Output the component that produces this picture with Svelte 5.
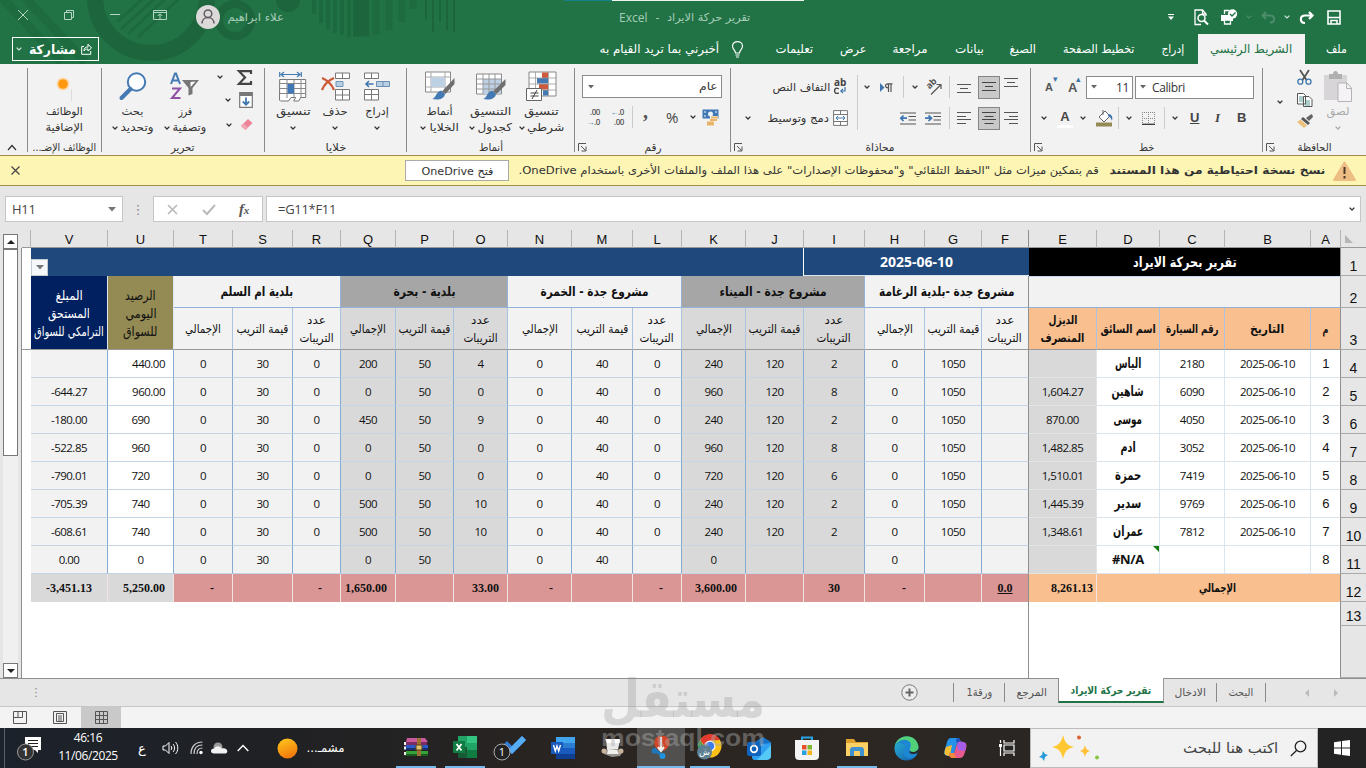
<script>
  // squeezes or stretches a label so it takes exactly its slot
  function fit(node, w) {
    const natural = node.offsetWidth;
    if (natural) node.style.transform = `scaleX(${w / natural})`;
  }

  const icons = {
    close: [12, 12, '<path d="M1 1l10 10M11 1L1 11" stroke="#b5d6c3" fill="none"/>'],
    restore: [12, 12, '<path d="M1.500 3.500h7v7h-7zM3.500 3.500v-2h7v7h-2" stroke="#b5d6c3" fill="none"/>'],
    minimize: [12, 12, '<path d="M1 5.500h10" stroke="#b5d6c3"/>'],
    ribbonopt: [14, 12, '<path d="M.5 1.500h13v9H.5zM.5 3.500h13M7 10V5M4.800 7L7 4.800 9.200 7" stroke="#b5d6c3" fill="none"/>'],
    avatar: [24, 24, '<circle cx="12" cy="12" r="12" fill="#dcd9d9"/><circle cx="12" cy="8.800" r="3.800" fill="none" stroke="#625b62" stroke-width="1.500"/><path d="M6 18.500c0-8 12-8 12 0" fill="none" stroke="#625b62" stroke-width="1.500"/>'],
    more: [6, 8, '<path d="M0 1.500h6" stroke="#fff"/><path d="M0 3.500h6L3 7z" fill="#fff"/>'],
    preview: [15, 17, '<path d="M7 15.500H1V1h7.500l3.500 4v2M8.500 1v4H12" fill="none" stroke="#fff" stroke-width="1.300"/><circle cx="7.500" cy="9" r="3.500" fill="none" stroke="#fff" stroke-width="1.500"/><path d="M10 11.500l4 4" stroke="#fff" stroke-width="2"/>'],
    printer: [18, 16, '<path d="M1 6h12v6H1z" fill="#fff"/><path d="M4.500 5V1.500h5M4.500 11h6v4h-6z" fill="#217346" stroke="#fff" stroke-width="1.300"/><circle cx="12.500" cy="5" r="4.700" fill="#fff"/><path d="M10 5l2 2 3.500-3.500" fill="none" stroke="#217346" stroke-width="1.300"/>'],
    undo: [15, 12, '<path d="M5 1L1.500 4.500 5 8M2 4.500h7c5.500 0 5.500 7 0 7" fill="none" stroke="#4b8d69" stroke-width="2"/>'],
    redo: [15, 13, '<path d="M10 1l3.500 3.500L10 8M13 4.500H6c-5.500 0-5.500 7.500 0 7.500" fill="none" stroke="#fff" stroke-width="2.200"/>'],
    save: [14, 15, '<path d="M1 1h12v13H1z" fill="none" stroke="#fff" stroke-width="1.600"/><path d="M1 7.500h12M4 14v-3.500h6V14" fill="none" stroke="#fff" stroke-width="1.500"/>'],
    share: [11, 12, '<path d="M3 3.500H.7v7.800h9V8M3 8c0-3 1.500-4 4-4V1.200L10.500 5 7 8V6C5 6 4 6.500 3 8z" fill="none" stroke="#fff"/>'],
    bulb: [11, 17, '<path d="M3.500 12c0-3-3-3.500-3-7C.5-.8 10.500-.8 10.500 5c0 3.500-3 4-3 7zM3.500 14h4M4 16h3" fill="none" stroke="#fff" stroke-width="1.200"/>'],
    chev: [6, 4, '<path d="M.6.6L3 3 5.400.6" fill="none" stroke="#333" stroke-width="1.300"/>'],
    chevw: [6, 4, '<path d="M.6.6L3 3 5.400.6" fill="none" stroke="#d3e5da" stroke-width="1.200"/>'],
    chevg: [6, 4, '<path d="M.6.6L3 3 5.400.6" fill="none" stroke="#aaa" stroke-width="1.300"/>'],
    chevdim: [6, 4, '<path d="M.6.6L3 3 5.400.6" fill="none" stroke="#4b8d69" stroke-width="1.200"/>'],
    tri: [6, 4, '<path d="M0 0h6L3 3.500z" fill="#666"/>'],
    tribig: [8, 5, '<path d="M0 0h8L4 4.500z" fill="#777"/>'],
    up: [10, 7, '<path d="M1 6l4-4.500L9 6" fill="none" stroke="#333" stroke-width="1.200"/>'],
    launch: [9, 9, '<path d="M.5 8V.5H8M3 3l4.500 4.500M8 3.500V8H3.500" fill="none" stroke="#555"/>'],
    addin: [18, 32, '<circle cx="8" cy="14" r="6.500" fill="#fbd9a9"/><circle cx="8" cy="14" r="4.800" fill="#ff9710"/><path d="M16.500 19v12" stroke="#ddd"/>'],
    find: [28, 28, '<circle cx="17.500" cy="10" r="8.700" fill="#fcfdff" stroke="#4479b3" stroke-width="2"/><path d="M11.500 17L2.500 26" stroke="#4479b3" stroke-width="4" stroke-linecap="round"/>'],
    sort: [30, 28, '<path d="M1 12L5 1.500h1L10 12M2.500 8.500h6" fill="none" stroke="#4479b3" stroke-width="2"/><path d="M2 16.500h8L2 26h8.500" fill="none" stroke="#9152a5" stroke-width="2"/><path d="M12 8h17l-6.500 8v6l-4 1.500V16z" fill="#777"/><path d="M20.500 10l5-.5-5 5.500z" fill="#fff"/>'],
    sigma: [16, 15, '<path d="M14 4V1.200H2L8 7.500 2 13.800h12V11" fill="none" stroke="#444" stroke-width="2.200"/>'],
    filldown: [14, 16, '<path d="M.7.700h12.600v14.600H.7z" fill="#fff" stroke="#777" stroke-width="1.200"/><path d="M1 1h12v3H1z" fill="#777"/><path d="M7 5.500v7M3.800 9.500L7 12.700l3.200-3.200" fill="none" stroke="#3f76ad" stroke-width="1.800"/>'],
    eraser: [13, 13, '<path d="M1 8l7-7 4.500 4L5.500 12z" fill="#ec8396"/><path d="M1 8l2.500-2.500L8 9.500 5.500 12z" fill="#f4a5b2"/>'],
    format: [28, 31, '<path d="M.7 1v5M22.300 1v5M2 3.500h19M5 1L2 3.500 5 6M18 1l3 2.500L18 6" fill="none" stroke="#4479b3" stroke-width="1.200"/><path d="M.7 8.500h26v18h-5l-2 3.500h-5l2-3.500H12L9.500 30h-8l-1-1z" fill="#fff" stroke="#777"/><path d="M1 12.500h26M1 22.500h26M8 8v19M15 8v19M22 8v19M1 17.500h26" stroke="#888"/><path d="M8.500 13h6.500v9.500H8.500z" fill="#3f78b4"/>'],
    delete: [29, 29, '<path d="M14.500 1h14v5.500h-14zM21.500 1v5.500M14.500 17.500h14V28h-14zM14.500 23h14M21.500 17v11" fill="#fff" stroke="#777"/><path d="M15 9.500h7v5h-7z" fill="#b7cfe5" stroke="#7294b8"/><path d="M1 6c5 2 10 7 12 12M13 6C8 8 3 13 1 18" fill="none" stroke="#cd5a3b" stroke-width="2.300"/>'],
    insert: [26, 28, '<path d="M.5 1h14v5.500H.5zM7.500 1v5.500M.5 17.500h14V28H.5zM.5 22.500h14M7.500 17v11" fill="#fff" stroke="#777"/><path d="M12.500 9.500h13v5h-13zM19 9.500v5" fill="#b7cfe5" stroke="#6d8eb0"/><path d="M9.500 12H2.500M5 9l-3 3 3 3" fill="none" stroke="#3f76ad" stroke-width="1.500"/>'],
    cellstyle: [30, 30, '<path d="M.5 1h25v20H.5z" fill="#fff" stroke="#888"/><path d="M.5 6h25M.5 16h25M6 1v20M20 1v20" stroke="#aaa"/><path d="M6 6.500h14V16H6z" fill="#bdd0e4"/><path d="M29.500 7v6l-9 10-3.500-2.500z" fill="#6f6f6f"/><path d="M16 19.500l4 3.500c-1 6-8 6-13 5 4-1 4-7 9-8.500z" fill="#4479b3"/>'],
    tablestyle: [30, 30, '<path d="M.5 3h25v20H.5z" fill="#fff" stroke="#888"/><path d="M7 8h18v15H7z" fill="#bdd0e4"/><path d="M.5 8h25M.5 13h25M.5 18h25M7 3v20M13 3v20M19 3v20" stroke="#999"/><path d="M29.500 8v6l-9 9-3.500-2.500z" fill="#6f6f6f"/><path d="M16 19.500l4 3.500c-1 6-8 6-13 5 4-1 4-7 9-8.500z" fill="#4479b3"/>'],
    condfmt: [31, 31, '<path d="M3 1h27v24H3z" fill="#fff" stroke="#888"/><path d="M16 1.500h6V7h-6zM13 13h9v5.500h-9z" fill="#cd5a3b"/><path d="M11 7h11v5.500H11zM17 19h5v5.500h-5z" fill="#4479b3"/><path d="M3 7h27M3 13h27M3 19h27M9.500 1v24M22.500 1v24" stroke="#999" stroke-width=".8"/><path d="M.5 17.500h15v12H.5z" fill="#fff" stroke="#666"/><path d="M4.500 22h8M4.500 25h8M11 19l-5 9" stroke="#444" fill="none"/>'],
    money: [18, 16, '<path d="M.5.500h16v9H.5z" fill="#3f78b4"/><path d="M2 3h2M13 3h2M2 7h2" stroke="#fff"/><circle cx="8.500" cy="5" r="2.500" fill="#e9f2fa"/><path d="M8 7h8v9H8z" fill="#f2f2f2"/><path d="M9 8.500h7M8 11h7M5 13.500h7M5 15.500h7" stroke="#eab568" stroke-width="1.800"/>'],
    wrap: [13, 8, '<path d="M4.800 1.800C1 0 .6 2.500.6 3.800.6 5.500 1.500 7.200 4.800 6" fill="none" stroke="#444" stroke-width="1.400"/><path d="M11 0v4H7M9 1.800L6.800 4 9 6.200" fill="none" stroke="#3f76ad" stroke-width="1.200"/>'],
    merge: [15, 16, '<path d="M.6.600h13.800v14.800H.6zM.6 4.500h13.800M.6 11.500h13.800M7.500.600v4M7.500 11.500v4" fill="#fff" stroke="#777"/><path d="M3 8h9M5 6L3 8l2 2M10 6l2 2-2 2" fill="none" stroke="#3f76ad"/>'],
    rtl: [13, 9, '<path d="M0 0l4.500 4.500L0 9z" fill="#3f76ad"/><path d="M8.500 9V1M11 9V1M12.500.800H8c-3.500 0-3 4 0 4" fill="none" stroke="#555" stroke-width="1.200"/>'],
    orient: [17, 16, '<path d="M5 14.500L15 4.500M15 9V4.500h-4.500" fill="none" stroke="#555" stroke-width="1.200"/>'],
    indentr: [16, 13, '<path d="M0 1h16M8.500 4.500H16M8.500 8H16M0 12h16" stroke="#555"/><path d="M0 6.200h6M3.500 3.500l3 2.700-3 2.800" fill="none" stroke="#3f76ad" stroke-width="1.700"/>'],
    indentl: [16, 13, '<path d="M0 1h16M8.500 4.500H16M8.500 8H16M0 12h16" stroke="#555"/><path d="M1 6.200h6M3.500 3.500L.8 6.200l2.700 2.800" fill="none" stroke="#3f76ad" stroke-width="1.700"/>'],
    vbottom: [14, 12, '<path d="M0 3.500h14M3 7.500h8M0 11.500h14" stroke="#555"/>'],
    vtop: [14, 12, '<path d="M0 -2.500h14M3 1.500h8M0 5.500h14" stroke="#555"/>'],
    vmid: [14, 12, '<path d="M0 1.500h14M3 5.500h8M0 9.500h14" stroke="#444"/>'],
    al: [14, 12, '<path d="M0 .5h14M0 4.500h9M0 7.500h14M0 11.500h9" stroke="#555"/>'],
    ac: [14, 12, '<path d="M0 .5h14M2.500 4.500h9M0 7.500h14M2.500 11.500h9" stroke="#444"/>'],
    ar: [14, 12, '<path d="M0 .5h14M5 4.500h9M0 7.500h14M5 11.500h9" stroke="#555"/>'],
    fill: [17, 17, '<path d="M0 12.500h16v4H0z" fill="#948a54"/><path d="M3 7l6-6 5 5-6 6zM7 0v5" fill="#fff" stroke="#666"/><path d="M12 4c4 0 5 3 4 7-1-3-2-4-4-5z" fill="#3f76ad"/>'],
    borders: [13, 13, '<path d="M.5 0v12M6.500 0v12M12.500 0v12M0 .5h13M0 6.500h13" stroke="#888" stroke-dasharray="1 1"/><path d="M0 12.300h13" stroke="#333" stroke-width="1.300"/>'],
    cut: [15, 15, '<path d="M3 0l6.500 10M12 0L5.500 10" stroke="#555" stroke-width="1.800"/><circle cx="3.300" cy="11.700" r="2.500" fill="none" stroke="#3f76ad" stroke-width="1.300"/><circle cx="11.500" cy="11.700" r="2.500" fill="none" stroke="#3f76ad" stroke-width="1.300"/>'],
    copy: [16, 14, '<path d="M.5.500h6l2 2V11h-8zM6.500 3.500h5.500l3 3v7H6.500z" fill="#fff" stroke="#555"/><path d="M2 4h4M2 6h4M2 8h4M8 8h5M8 10h5M8 12h5" stroke="#2f8079" stroke-width=".8"/>'],
    painter: [16, 14, '<path d="M15 0l1 3-4 4-3-3 4-3z" fill="#666"/><path d="M6 3l7 6-2 2-7-6z" fill="#555"/><path d="M3.500 5.500l6.500 6L7 14 0 8z" fill="#edc07b"/>'],
    paste: [28, 31, '<path d="M0 4h23v25H0z" fill="#d8d5d8"/><path d="M5 3h4c0-4 5-4 5 0h4v5H5z" fill="#b0b0b0"/><path d="M14 12h9l4.500 5v13.500H14z" fill="#f6f3f6" stroke="#b4b4b4"/><path d="M22.500 12v5.500H28" fill="none" stroke="#b4b4b4"/>'],
    warn: [23, 20, '<path d="M11.500 1.500L22 19H1z" fill="#eebd84" stroke="#eebd84" stroke-width="2" stroke-linejoin="round"/><path d="M11.500 6v7M11.500 15v2.500" stroke="#4a3a28" stroke-width="2"/>'],
    x: [11, 11, '<path d="M1 1l9 9M10 1l-9 9" stroke="#b9b9b9" stroke-width="1.600"/>'],
    xd: [9, 9, '<path d="M.5.500l8 8M8.500.500l-8 8" stroke="#444" stroke-width="1.200"/>'],
    tick: [14, 11, '<path d="M1 6l4 4 8-9" fill="none" stroke="#b9b9b9" stroke-width="2"/>'],
    plus: [17, 17, '<circle cx="8.500" cy="8.500" r="7.700" fill="#ededed" stroke="#777"/><path d="M8.500 4.500v8M4.500 8.500h8" stroke="#666" stroke-width="2"/>'],
    left: [4, 8, '<path d="M4 0v8L0 4z" fill="#bbb"/>'],
    right: [4, 8, '<path d="M0 0v8l4-4z" fill="#bbb"/>'],
    pagebreak: [14, 13, '<path d="M.5.500h13v12H.5zM5 .5v6M9.500.5v6M.5 6.500h9" fill="none" stroke="#555"/>'],
    pagelayout: [14, 13, '<path d="M.5.500h13v12H.5zM3.500 2.500h7v8h-7zM5 5h4M5 7h4M5 9h4" fill="none" stroke="#555"/>'],
    normal: [13, 13, '<path d="M.5.500h12v12H.5zM4.500.500v12M8.500.500v12M.5 4.500h12M.5 8.500h12" fill="none" stroke="#555"/>'],
    notif: [25, 26, '<path d="M8 2h16v13h-3v3l-3-3H8z" fill="#fff"/><path d="M11 5.500h10M11 8.500h10M13 11.500h8" stroke="#222"/><circle cx="8.500" cy="17" r="8" fill="#333" stroke="#999"/><text x="8.500" y="21" text-anchor="middle" fill="#fff" font-size="11" font-family="Open Sans, sans-serif" font-weight="600">1</text>'],
    speaker: [17, 14, '<path d="M1 5h2.500L7 1.500v11L3.500 9H1zM9 5c1 1 1 3 0 4M11 3c2 2 2 6 0 8M13.500 1c3 3 3 9 0 12" fill="none" stroke="#fff"/>'],
    wifi: [13, 14, '<path d="M1 13C1 5 6 1 12.500 1M4 13c0-6 3-9 8.500-9M7 13c0-4 2-6 5.500-6" fill="none" stroke="#ccc" stroke-width="1.200"/><circle cx="11" cy="11.500" r="1.700" fill="#fff"/>'],
    cloud: [17, 12, '<circle cx="7" cy="5" r="4.500" fill="#999"/><path d="M3 11.500c-4 0-4-5 0-5 2-3 6-3 7.500 0 6-2 8 5 3 5z" fill="#f1f1f1"/>'],
    tup: [12, 8, '<path d="M.7 7L6 1.500 11.300 7" fill="none" stroke="#fff" stroke-width="1.400"/>'],
    sun: [21, 21, '<defs><linearGradient id="s" x1=".3" x2=".7" y2="1"><stop stop-color="#ffc21c"/><stop offset="1" stop-color="#f0730c"/></linearGradient></defs><circle cx="10.500" cy="10.500" r="10" fill="url(#s)"/>'],
    winrar: [25, 20, '<path d="M3 1h18l3 4H2z" fill="#c85a9b"/><path d="M1 5h22v4H1z" fill="#7b2d63"/><path d="M2 8h22v5H2z" fill="#2c59c8"/><path d="M1 11h23v2H1z" fill="#18306e"/><path d="M2 14h22v5H2z" fill="#37a13a"/><path d="M1 17h23v2H1z" fill="#1b5a21"/><path d="M1 5v3M1 9.500v3M1 15v3" stroke="#eee" stroke-width="2"/><path d="M13 1h4v18h-4z" fill="#9c7132"/><path d="M12 8h6v5h-6z" fill="#e0bf6a" stroke="#5a4118"/>'],
    excel: [24, 22, '<path d="M5 0h19v22H5z" fill="#21a366"/><path d="M14 0h10v7H14z" fill="#33c481"/><path d="M5 11h9v11H5z" fill="#185c37"/><path d="M14 14h10v8H14z" fill="#107c41"/><path d="M0 5h12v12H0z" fill="#107c41"/><path d="M3.500 8l5 6.500M8.500 8l-5 6.500" stroke="#fff" stroke-width="1.800"/>'],
    todo: [34, 26, '<path d="M10 10l4-4 5 5 10-10 4 4-14 14z" fill="#2f7ad6"/><path d="M15 15L29 1l4 4-14 14z" fill="#55aef4"/><circle cx="9" cy="17" r="8" fill="#222" stroke="#aaa"/><text x="9" y="21" text-anchor="middle" fill="#fff" font-size="11" font-family="Open Sans, sans-serif">1</text>'],
    word: [24, 22, '<path d="M5 0h19v22H5z" fill="#2b7cd3"/><path d="M5 0h19v6H5z" fill="#41a5ee"/><path d="M5 11h19v6H5z" fill="#185abd"/><path d="M5 17h19v5H5z" fill="#103f91"/><path d="M0 5h12v12H0z" fill="#185abd"/><path d="M2.500 8l1.800 6L6 9l1.700 5 1.800-6" fill="none" stroke="#fff" stroke-width="1.400"/>'],
    scroll: [23, 20, '<path d="M5 1h14l-2 11H6z" fill="#e8e8e8"/><path d="M4 1h15v4H6z" fill="#fff"/><path d="M1 11l7 1 8-1 6 2-3 5-8 1-8-3z" fill="#9a948e"/><path d="M7 12h9l2 4H6z" fill="#f3f1ee"/><circle cx="3" cy="13" r="2.500" fill="#c9b49d"/><circle cx="20" cy="13" r="2.500" fill="#c9b49d"/>'],
    snip: [20, 25, '<path d="M5 3C8 0 14 0 17 3c3 4 1 10-4 13l-2-3-2 3C3 13 2 7 5 3z" fill="#d14424"/><path d="M10 2v13M7 12l3 4 3-4" fill="none" stroke="#eee" stroke-width="2.200"/><path d="M3 14l6 5" stroke="#1f78bd" stroke-width="3"/><circle cx="3.500" cy="16" r="2.800" fill="#1f78bd"/><circle cx="11.500" cy="21" r="3" fill="#2294dc"/>'],
    chrome: [26, 26, '<circle cx="13" cy="12" r="11.500" fill="#fbc116"/><path d="M3 6c5-8 16-8 20 0l-10 .5-4 7z" fill="#e33b2e"/><path d="M3 6l6 10 4 1.500-4 6C0 21-1 12 3 6z" fill="#269947"/><circle cx="13" cy="12" r="5.500" fill="#fff"/><circle cx="13" cy="12" r="4.300" fill="#3b7ded"/><circle cx="7.500" cy="18" r="7.500" fill="#5d7f91"/><text x="7.500" y="21" text-anchor="middle" fill="#fff" font-size="9" font-family="DejaVu Sans, sans-serif">ش</text>'],
    outlook: [25, 23, '<path d="M8 5l8-5 8 5v4H8z" fill="#1470c5"/><path d="M5 8l19-2v13c0 3-3 4-5 4H8c-2 0-3-1-3-3z" fill="#2f9ff0"/><path d="M24 8v11c0 3-3 4-5 4H10z" fill="#56c8f5"/><rect y="5" width="14" height="14" rx="2" fill="#0f62bd"/><circle cx="7" cy="12" r="3.300" fill="none" stroke="#fff" stroke-width="1.700"/>'],
    store: [24, 24, '<path d="M7 5V1.500h10V5" fill="none" stroke="#2aa1de" stroke-width="2"/><path d="M0 4h24v16c0 3-2 4-4 4H4c-2 0-4-1-4-4z" fill="#f4f4f4"/><path d="M7 9h4.500v4.500H7z" fill="#e8502d"/><path d="M12.500 9H17v4.500h-4.500z" fill="#7cb82f"/><path d="M7 14.500h4.500V19H7z" fill="#2aa1de"/><path d="M12.500 14.500H17V19h-4.500z" fill="#f7b51b"/>'],
    explorer: [23, 19, '<path d="M0 1h8l2 3h12v14H0z" fill="#dca02b"/><path d="M0 5h22v13H0z" fill="#fbd064"/><path d="M4 18v-6c0-2 1-3 3-3h8c2 0 3 1 3 3v6h-4v-5H8v5z" fill="#4091cf"/>'],
    edge: [25, 25, '<defs><linearGradient id="e" y2="1"><stop stop-color="#2ab7d9"/><stop offset="1" stop-color="#1256a8"/></linearGradient></defs><circle cx="12.500" cy="12.500" r="12" fill="url(#e)"/><path d="M1 9C5-3 23-3 24.500 11c0 5-5 6-9 4 3-6-5-11-14.500-6z" fill="#51cf79"/><path d="M1 9C8 0 19 4 16.500 11c-2 4 1 7 7 6-3 8-14 7-14-1 0-4 3-6 3-6S7 5 1 9z" fill="#1d87d3"/><path d="M15.500 15c3 2 9 1 9-4v3l-1 3c-4 2-9 1-8-2z" fill="#25272b"/>'],
    copilot: [23, 22, '<path d="M7 1h8l3 6h-5l-3 9c-1 3-3 4-6 3-5-1-4-3-3-7l2-7c1-3 2-4 4-4z" fill="#2492e8"/><path d="M2 10l6-2-2 11c-7 0-6-4-4-9z" fill="#f1bf35"/><path d="M15 1l3 6h-5l-1-5z" fill="#1c4fc2"/><path d="M16 21H8c-2 0-3-3-3-5h5l3-9c1-3 3-3 6-2 4 1 4 3 3 7l-2 6c-1 2-2 3-4 3z" fill="#e65a8e"/><path d="M13 7c2-3 9-3 9 1l-1 6-7-1z" fill="#a45eea"/><path d="M5 16h5l2 5H8c-2 0-3-3-3-5z" fill="#f0893c"/>'],
    taskview: [17, 16, '<path d="M6 0v3h10V0M6 16v-3h10v3M6 5h10v6H6zM2.500 0v3M2.500 7v9" fill="none" stroke="#fff" stroke-width="1.200"/><path d="M1 4h3v3H1z" fill="#fff"/>'],
    stars: [62, 26, '<path d="M4 16l2 3 3 1-3 2-1 4-2-3-3-1 3-2z" fill="#269bdb"/><path d="M24 0c2 8 4 10 11 12-7 2-9 4-11 12-2-8-4-10-11-12 7-2 9-4 11-12z" fill="#ffc832"/><path d="M46 10c1 4 2 5 5 6-3 1-4 2-5 6-1-4-2-5-5-6 3-1 4-2 5-6z" fill="#ffbf36"/><circle cx="40" cy="2.500" r="2" fill="#da6332"/><circle cx="58" cy="22.500" r="2" fill="#89c543"/>'],
    search: [17, 17, '<circle cx="10.500" cy="6.500" r="5.300" fill="none" stroke="#222" stroke-width="1.300"/><path d="M6.500 10.500L.8 16" stroke="#222" stroke-width="1.300"/>'],
    start: [16, 16, '<path d="M0 2.300l7-1v6.200H0zM8 1.100L16 0v7.500H8zM0 8.500h7v6.200l-7-1zM8 8.500h8V16l-8-1.100z" fill="#fff"/>']
  };

  const menu = [
    { w: 38, gap: 27, t: 'تعليمات' },
    { w: 26, gap: 27, t: 'عرض' },
    { w: 35, gap: 27, t: 'مراجعة' },
    { w: 29, gap: 26, t: 'بيانات' },
    { w: 26, gap: 27, t: 'الصيغ' },
    { w: 71, gap: 27, t: 'تخطيط الصفحة' },
    { w: 23, gap: 14, t: 'إدراج' }
  ];

  const letters = 'VUTSRQPONMLKJIHGFEDCBA'.split('');
  const heights = [28, 32, 42, 28, 28, 28, 28, 28, 28, 28, 28, 28, 24];

  const d = '2025-06-10';
  const names = ['الياس', 'شاهين', 'موسى', 'ادم', 'حمزة', 'سدير', 'عمران'];
  const nameW = [26, 32, 28, 15, 26, 27, 30];
  const rows = [
    ['', '440.00', 0, 30, 0, 200, 50, 4, 0, 40, 0, 240, 120, 2, 0, 1050, '', '', 0, 2180, d, 1],
    ['-644.27', '960.00', 0, 30, 0, 0, 50, 0, 0, 40, 0, 960, 120, 8, 0, 1050, '', '1,604.27', 0, 6090, d, 2],
    ['-180.00', 690, 0, 30, 0, 450, 50, 9, 0, 40, 0, 240, 120, 2, 0, 1050, '', '870.00', 0, 4050, d, 3],
    ['-522.85', 960, 0, 30, 0, 0, 50, 0, 0, 40, 0, 960, 120, 8, 0, 1050, '', '1,482.85', 0, 3052, d, 4],
    ['-790.01', 720, 0, 30, 0, 0, 50, 0, 0, 40, 0, 720, 120, 6, 0, 1050, '', '1,510.01', 0, 7419, d, 5],
    ['-705.39', 740, 0, 30, 0, 500, 50, 10, 0, 40, 0, 240, 120, 2, 0, 1050, '', '1,445.39', 0, 9769, d, 6],
    ['-608.61', 740, 0, 30, 0, 500, 50, 10, 0, 40, 0, 240, 120, 2, 0, 1050, '', '1,348.61', 0, 7812, d, 7],
    ['0.00', 0, 0, 30, '', 0, 50, '', 0, 40, '', 0, '', '', 0, '', '', '', 0, '', '', 8]
  ];
  const totals = ['-3,451.13', '5,250.00', '-', '', '-', '1,650.00', '', '33.00', '-', '', '-', '3,600.00', '', '30', '-', '', '0.0', '8,261.13'];

  const groups = [
    { from: 4, span: 3, t: 'بلدية ام السلم', w: 73 },
    { from: 7, span: 3, t: 'بلدية - بحرة', w: 62, dark: true },
    { from: 10, span: 3, t: 'مشروع جدة - الخمرة', w: 108 },
    { from: 13, span: 3, t: 'مشروع جدة - الميناء', w: 107, dark: true },
    { from: 16, span: 3, t: 'مشروع جدة -بلدية الرغامة', w: 135 }
  ];
  const orange = [
    { t: ['الديزل', 'المنصرف'], w: [29, 44] },
    { t: ['اسم السائق'], w: [55] },
    { t: ['رقم السيارة'], w: [53] },
    { t: ['التاريخ'], w: [34] },
    { t: ['م'], w: [6] }
  ];

  function shade(i) {
    if (i === 1) return 'white';
    if ((i >= 5 && i <= 7) || (i >= 11 && i <= 13)) return 'grey';
    if (i === 17) return 'grey diesel';
    if (i > 17) return 'white plain';
    return 'light';
  }

  const apps = [
    { n: 'winrar', x: 396, w: 40, on: true },
    { n: 'excel', x: 445, w: 40, on: true },
    { n: 'todo', x: 490, w: 40 },
    { n: 'word', x: 543, w: 40 },
    { n: 'scroll', x: 592, w: 40 },
    { n: 'snip', x: 637, w: 48, on: true, hot: true },
    { n: 'chrome', x: 690, w: 40, on: true },
    { n: 'outlook', x: 739, w: 40 },
    { n: 'store', x: 787, w: 40 },
    { n: 'explorer', x: 837, w: 40, on: true },
    { n: 'edge', x: 886, w: 40 },
    { n: 'copilot', x: 935, w: 40 },
    { n: 'taskview', x: 986, w: 40 }
  ];
  const appCols = apps.map((a, i) => (i < apps.length - 1 ? apps[i + 1].x - a.x : 44) + 'px').join(' ');
</script>

{#snippet icon(name)}
  <svg class="ic" width={icons[name][0]} height={icons[name][1]} viewBox="0 0 {icons[name][0]} {icons[name][1]}">{@html icons[name][2]}</svg>
{/snippet}

{#snippet label(t, w, cls = '')}
  <span class="fit {cls}" style:width="{w}px"><span dir="rtl" use:fit={w}>{t}</span></span>
{/snippet}

{#snippet big(name, a, aw, b, bw)}
  <div class="big">
    <div class="bigicon">{@render icon(name)}</div>
    {@render label(a, aw)}
    <div class="second">
      {#if b}{@render icon('chev')}{@render label(b, bw)}{:else}{@render icon('chev')}{/if}
    </div>
  </div>
{/snippet}

<div class="screen">
  <header>
    <svg class="art" width="810" height="64" viewBox="0 0 810 64">
      <g fill="none" stroke="#1d653c">
        <path d="M-5 -10L62 62M18 -10L85 62" stroke-width="9" opacity=".6" />
        <circle cx="151" cy="-3" r="56" stroke-width="16" />
        <path d="M117 22L150 -8M121 29L162 -8M128 34L170 -6M138 37L180 -2" stroke-width="3" opacity=".7" />
        <circle cx="235" cy="20" r="16" stroke-width="8" />
        <path d="M314 0v14M321 0v23M328 0v29M335 0v33M342 0v35M349 0v37" stroke-width="4" opacity=".7" />
        <path d="M376 0v35M389 0v30M402 0v22M413 0v9" stroke-width="7" opacity=".6" />
        <path d="M426 0v20M433 0v32M440 0v22M447 0v30M454 0v32" stroke-width="2" />
      </g>
      <circle cx="288" cy="0" r="12" fill="#1d653c" />
      <path d="M353 0h16v36l-16 1z" fill="#1d653c" />
      <path d="M564 0h48v1h-48z" fill="#16818a" />
      <path d="M612 0h192v1H612z" fill="#eef5f0" />
    </svg>
    <div class="titlebar">
      {@render icon('close')}{@render icon('restore')}{@render icon('minimize')}{@render icon('ribbonopt')}{@render icon('avatar')}
      {@render label('علاء ابراهيم', 56, 'pale')}
      <span class="doc"><span>Excel</span><span>-</span>{@render label('تقرير حركة الايراد', 83)}</span>
      {@render icon('more')}{@render icon('preview')}{@render icon('printer')}{@render icon('chevdim')}{@render icon('undo')}{@render icon('chevw')}{@render icon('redo')}{@render icon('save')}
    </div>
    <nav>
      <button class="share">{@render icon('chevw')}{@render label('مشاركة', 47, 'bold')}{@render icon('share')}</button>
      <span class="tell">{@render label('أخبرني بما تريد القيام به', 120)}{@render icon('bulb')}</span>
      {#each menu as m}
        <span style:margin-right="{m.gap}px">{@render label(m.t, m.w)}</span>
      {/each}
      <span class="tab">{@render label('الشريط الرئيسي', 82)}</span>
      {@render label('ملف', 21)}
    </nav>
  </header>

  <section class="ribbon">
    <div class="group g0">{@render icon('up')}</div>
    <div class="group addins">
      <div class="body">
        <div class="big"><div class="bigicon">{@render icon('addin')}</div>{@render label('الوظائف', 37)}<div class="second">{@render label('الإضافية', 38)}</div></div>
      </div>
      <div class="name">{@render label('الوظائف الإضـ...', 64)}</div>
    </div>
    <div class="group editing">
      <div class="body">
        {@render big('find', 'بحث', 22, 'وتحديد', 33)}
        {@render big('sort', 'فرز', 14, 'وتصفية', 34)}
        <div class="small">
          <div class="wide">{@render icon('chev')}{@render icon('sigma')}</div>
          <div>{@render icon('chev')}{@render icon('filldown')}</div>
          <div>{@render icon('chev')}{@render icon('eraser')}</div>
        </div>
      </div>
      <div class="name">{@render label('تحرير', 23)}</div>
    </div>
    <div class="group cells">
      <div class="body">
        {@render big('format', 'تنسيق', 35)}
        {@render big('delete', 'حذف', 25)}
        {@render big('insert', 'إدراج', 23)}
      </div>
      <div class="name">{@render label('خلايا', 21)}</div>
    </div>
    <div class="group styles">
      <div class="body">
        {@render big('cellstyle', 'أنماط', 26, 'الخلايا', 30)}
        {@render big('tablestyle', 'التنسيق', 41, 'كجدول', 34)}
        {@render big('condfmt', 'تنسيق', 35, 'شرطي', 37)}
      </div>
      <div class="name">{@render label('أنماط', 24)}</div>
    </div>
    <div class="group number">
      <div class="body stack">
        <div class="select">{@render icon('tri')}{@render label('عام', 19)}</div>
        <div class="row numrow">
          <span class="dec"><span>.00</span><span><i>→</i>.0</span></span><span class="dec"><span><i>←</i>.0</span><span>.00</span></span><b class="vr"></b>
          <span class="comma">,</span><span class="pct">%</span>{@render icon('chev')}{@render icon('money')}
        </div>
      </div>
      <div class="name">{@render icon('launch')}{@render label('رقم', 17)}</div>
    </div>
    <div class="group align">
      <div class="body stack">
        <div class="row arow1">
          {@render label('التفاف النص', 58)}<span class="ab">ab{@render icon('wrap')}</span><b class="vr tall"></b>
          {@render icon('chev')}{@render icon('rtl')}<b class="vr"></b>{@render icon('chev')}<span class="or"><span>ab</span>{@render icon('orient')}</span><b class="vr"></b>
          {@render icon('vbottom')}<span class="pressed">{@render icon('vmid')}</span>{@render icon('vtop')}
        </div>
        <div class="row arow2">
          {@render icon('chev')}{@render label('دمج وتوسيط', 61)}{@render icon('merge')}
          {@render icon('indentl')}{@render icon('indentr')}<b class="vr"></b>
          {@render icon('al')}<span class="pressed">{@render icon('ac')}</span>{@render icon('ar')}
        </div>
      </div>
      <div class="name">{@render icon('launch')}{@render label('محاذاة', 29)}</div>
    </div>
    <div class="group font">
      <div class="body stack">
        <div class="row frow1">
          <span class="sz s">A<i>▾</i></span><span class="sz">A<i>▴</i></span>
          <span class="box">{@render icon('tri')}11</span>
          <span class="box fam">{@render icon('tri')}Calibri</span>
        </div>
        <div class="row frow2">
          {@render icon('chev')}<span class="fcol">A</span>{@render icon('chev')}{@render icon('fill')}<b class="vr"></b>
          {@render icon('chev')}{@render icon('borders')}<b class="vr"></b>{@render icon('chev')}
          <span class="u">U</span><span class="i">I</span><span class="bb">B</span>
        </div>
      </div>
      <div class="name">{@render icon('launch')}{@render label('خط', 15)}</div>
    </div>
    <div class="group clip">
      <div class="body">
        <div class="only">{@render icon('chev')}</div>
        <div class="tools">{@render icon('cut')}{@render icon('copy')}{@render icon('painter')}</div>
        <div class="big off"><div class="bigicon">{@render icon('paste')}</div>{@render label('لصق', 23)}<div class="second">{@render icon('chevg')}</div></div>
      </div>
      <div class="name">{@render icon('launch')}{@render label('الحافظة', 34)}</div>
    </div>
  </section>

  <section class="notice">
    {@render icon('xd')}
    <button>{@render label('فتح OneDrive', 72)}</button>
    {@render label('قم بتمكين ميزات مثل "الحفظ التلقائي" و"محفوظات الإصدارات" على هذا الملف والملفات الأخرى باستخدام OneDrive.', 580)}
    {@render label('نسخ نسخة احتياطية من هذا المستند', 216, 'bold')}
    {@render icon('warn')}
  </section>

  <section class="formula">
    <div class="ref">H11{@render icon('tribig')}</div>
    <span class="dots">⋮</span>
    <div class="fx">{@render icon('x')}{@render icon('tick')}<em>f<small>x</small></em></div>
    <div class="expr">=G11*F11{@render icon('chev')}</div>
  </section>

  <section class="book">
    <div class="vscroll">
      <span class="arrow"><svg width="8" height="4"><path d="M0 4h8L4 0z" fill="#222" /></svg></span>
      <span class="thumb"></span>
      <span class="track"></span>
      <span class="arrow"><svg width="8" height="4"><path d="M0 0h8L4 4z" fill="#222" /></svg></span>
    </div>
    <div class="grid">
      <div class="colh"></div>
      {#each letters as l}<div class="colh" class:freeze={l === 'F'}>{l}</div>{/each}
      <div class="corner"><svg width="8" height="8"><path d="M0 0v8h8z" fill="#b5b5b5" /></svg></div>

      {#each heights as h, r}
        <div class="rowh" style:grid-row={r + 2}>{r + 1}</div>
      {/each}
      <div class="rowh last"></div>
      <div class="pad"></div>

      <div class="navy long"><span class="filter">{@render icon('tribig')}</span></div>
      <div class="navy date">{d}</div>
      <div class="black">{@render label('تقرير بحركة الايراد', 104, 'bold')}</div>
      <div class="blank"></div>

      <div class="vhead">{@render label('المبلغ', 27)}{@render label('المستحق', 42)}{@render label('الترامكي للسواق', 70)}</div>
      <div class="uhead">{@render label('الرصيد', 31)}{@render label('اليومي', 31)}{@render label('للسواق', 34)}</div>
      {#each groups as g}
        <div class="ghead" class:dark={g.dark} class:freeze={g.from === 16} style:grid-column="{g.from} / span {g.span}">{@render label(g.t, g.w, 'bold')}</div>
        <div class="sub" class:dark={g.dark} style:grid-column={g.from}>{@render label('الإجمالي', 36)}</div>
        <div class="sub" class:dark={g.dark} style:grid-column={g.from + 1}>{@render label('قيمة التريب', 52)}</div>
        <div class="sub" class:dark={g.dark} class:freeze={g.from === 16} style:grid-column={g.from + 2}>{@render label('عدد', 19)}{@render label('التريبات', 34)}</div>
      {/each}
      {#each orange as o, i}
        <div class="sub orange" style:grid-column={19 + i}>
          {#each o.t as t, k}{@render label(t, o.w[k], 'bold')}{/each}
        </div>
      {/each}

      {#each rows as row, r}
        {#each row as v, c}
          <div class="cell {shade(c)}" class:freeze={c === 16} class:right={c === 1 && r < 2} class:num={c === 21} style:grid-row={r + 5} style:grid-column={c + 2}>
            {#if c === 18 && r === 7}
              <b class="na">#N/A</b><span class="err"></span>
            {:else if c === 18}
              {@render label(names[r], nameW[r], 'bold')}
            {:else}{v}{/if}
          </div>
        {/each}
      {/each}

      {#each totals as t, c}
        <div class="total" class:tgrey={c < 2} class:torange={c === 17} class:freeze={c === 16} class:under={c === 16} class:mid={c === 0 || c === 13 || c === 16} class:dash={t === '-'} style:grid-column={c + 2}>{t}</div>
      {/each}
      <div class="total torange mid sum">{@render label('الإجمالي', 37, 'bold')}</div>
      <div class="below"></div>
      <div class="below b2"></div>
    </div>
  </section>

  <section class="tabs">
    <span class="dots">⋮</span>
    {@render icon('plus')}
    <span class="st w1">{@render label('ورقة1', 26)}</span>
    <span class="st w2">{@render label('المرجع', 31)}</span>
    <span class="st active">{@render label('تقرير حركة الايراد', 81, 'bold')}</span>
    <span class="st w3">{@render label('الادخال', 31)}</span>
    <span class="st w4">{@render label('البحث', 25)}</span>
    <span class="arrows">{@render icon('left')}{@render icon('right')}</span>
  </section>

  <section class="status">
    <span>{@render icon('pagebreak')}</span><span>{@render icon('pagelayout')}</span><span class="sel">{@render icon('normal')}</span>
  </section>

  <footer>
    <div class="tray">
      <i class="peek"></i>
      {@render icon('notif')}
      <div class="clock"><span>46:16</span><span>11/06/2025</span></div>
      <span class="lang">ع</span>
      {@render icon('speaker')}{@render icon('wifi')}{@render icon('cloud')}{@render icon('tup')}{@render icon('sun')}
      {@render label('مشمـ...', 38)}
    </div>
    <div class="apps" style:grid-template-columns={appCols}>
      {#each apps as a}
        <span class="app" class:running={a.on} class:hot={a.hot} style:width="{a.w}px">{@render icon(a.n)}</span>
      {/each}
    </div>
    <div class="search">{@render icon('stars')}{@render label('اكتب هنا للبحث', 95)}{@render icon('search')}</div>
    <div class="start">{@render icon('start')}</div>
  </footer>

  <div class="mark">
    {@render label('مستقل', 164, 'bold m1')}
    {@render label('mostaql.com', 164, 'bold m2')}
  </div>
</div>

<style>
  :global(body) { margin: 0; }
  .screen, .screen :global(*) { box-sizing: border-box; }
  .screen {
    position: relative;
    width: 1366px;
    height: 768px;
    overflow: hidden;
    direction: ltr;
    font: 12px/15px "Open Sans", "DejaVu Sans", sans-serif;
    color: #333;
    background: #e6e6e6;
  }
  .ic { display: block; flex: none; overflow: visible; }
  .fit { display: inline-flex; justify-content: center; flex: none; white-space: nowrap; font-family: "DejaVu Sans", sans-serif; }
  .fit > span { flex: none; }
  .bold { font-weight: bold; }
  button { padding: 0; background: none; color: inherit; font: inherit; }

  header { position: relative; height: 64px; background: #217346; color: #fff; }
  .art { position: absolute; left: 0; top: 0; }
  .titlebar {
    position: relative;
    height: 34px;
    display: grid;
    grid-template-columns: 46px 46px 44px 43px 32px 391px 549px 26px 26px 26px 15px 23px 15px 28px 20px;
    align-items: center;
    padding-left: 17px;
  }
  .titlebar > .ic:nth-child(-n + 4) { margin-top: -4px; }
  .titlebar .fit { font-size: 11px; color: #a7cdb7; }
  .doc { display: flex; gap: 8px; font-size: 12px; color: #a7cdb7; white-space: nowrap; }
  nav { position: relative; height: 30px; display: flex; align-items: center; padding-left: 12px; }
  nav > span { display: flex; }
  .share { display: flex; align-items: center; width: 87px; height: 24px; margin-right: 500px; padding-left: 3px; border: 1px solid #fff; gap: 5px; }
  .share .fit { margin-left: 2px; font-size: 13px; }
  .tell { gap: 13px; margin-right: 32px; align-items: center; }
  nav .tab { width: 107px; height: 30px; margin-right: 21px; background: #f2f2f2; color: #217346; justify-content: center; align-items: center; }

  .ribbon { display: flex; height: 92px; background: #f2f2f2; border-bottom: 1px solid #a08c46; padding-top: 4px; }
  .group { height: 84px; border-right: 1px solid #8a8a8a; display: flex; flex-direction: column; font-size: 11px; }
  .g0 { width: 28px; justify-content: flex-end; align-items: center; padding: 0 4px 1px 0; }
  .body { flex: none; height: 72px; display: flex; }
  .name { flex: none; position: relative; height: 14px; display: flex; justify-content: center; align-items: center; }
  .name > .ic { position: absolute; left: 3px; top: 3px; }
  .big { display: flex; flex-direction: column; align-items: center; }
  .bigicon { height: 36px; display: flex; align-items: center; }
  .second { display: flex; align-items: center; height: 15px; gap: 3px; margin-top: 1px; }
  .addins { width: 74px; }
  .addins .big { width: 72px; }
  .editing { width: 163px; }
  .editing .big { width: 52px; }
  .editing .big:first-child { width: 57px; padding-left: 4px; }
  .small { width: 40px; display: flex; flex-direction: column; }
  .small div { display: flex; align-items: center; justify-content: flex-end; gap: 8px; height: 23px; }
  .small .wide { height: 18px; gap: 14px; }
  .editing .small { height: 69px; gap: 2px; margin-left: 2px; }
  .cells { width: 142px; }
  .cells .big { width: 42px; }
  .cells .big:first-child { margin-left: 7px; }
  .styles { width: 168px; }
  .styles .big { width: 51px; }
  .styles .big:first-child { margin-left: 7px; }
  .number { width: 156px; }
  .stack { flex-direction: column; }
  .select { display: flex; align-items: center; justify-content: space-between; width: 140px; height: 23px; margin: 7px 0 0 7px; padding: 0 3px 0 5px; border: 1px solid #8a8a8a; background: #fff; }
  .row { display: grid; align-items: center; grid-template-rows: 24px; height: 24px; }
  .vr { width: 1px; height: 22px; background: #ccc; }
  .vr.tall { align-self: start; height: 55px; }
  .numrow { margin: 7px 0 0 10px; grid-template-columns: 24px 23px 11px 23px 24px 12px 20px; }
  .dec { display: flex; flex-direction: column; align-items: flex-end; font: 600 8px/11px "Open Sans", sans-serif; letter-spacing: -.4px; color: #555; width: 15px; }
  .dec span { display: flex; height: 10px; line-height: 10px; }
  .dec i { color: #3f76ad; font-style: normal; }
  .comma { font: bold 20px/10px "Liberation Serif", serif; color: #555; margin-top: -12px; }
  .pct { font-size: 15px; color: #444; }
  .align { width: 300px; }
  .arow1 { margin-top: 7px; padding-left: 41px; grid-template-columns: 62px 23px 7px 16px 23px 9px 13px 24px 8px 21px 27px 20px; }
  .arow2 { margin-top: 7px; padding-left: 14px; grid-template-columns: 23px 65px 67px 25px 24px 8px 21px 27px 20px; }
  .ab { font: bold 10px/9px "Open Sans", sans-serif; color: #444; height: 18px; }
  .pressed { display: flex; align-items: center; justify-content: center; width: 22px; height: 23px; border: 1px solid #858585; background: #c9c9c9; margin-left: -6px; }
  .pressed + .ic { margin-left: -1px; }
  .arow1 .pressed, .arow2 .pressed { margin-left: 0; }
  .or { position: relative; font: bold 9px/12px "Open Sans", sans-serif; color: #555; }
  .or span { display: inline-block; transform: rotate(-45deg) translate(3px, -2px); }
  .or .ic { position: absolute; left: 1px; top: -1px; }
  .font { width: 232px; }
  .frow1 { margin-top: 7px; padding-left: 14px; grid-template-columns: 23px 18px 49px 120px; }
  .sz { position: relative; font: bold 13px/15px "Liberation Sans", sans-serif; color: #555; }
  .sz.s { font-size: 11px; }
  .sz i { position: absolute; left: 8px; top: -7px; color: #3f76ad; font: 9px/12px "DejaVu Sans"; }
  .box { display: flex; align-items: center; justify-content: space-between; height: 23px; width: 47px; border: 1px solid #8a8a8a; background: #fff; padding: 0 3px 0 4px; font-size: 12px; letter-spacing: -.4px; }
  .fam { width: 119px; justify-content: flex-start; gap: 6px; }
  .frow2 { margin-top: 7px; padding-left: 10px; grid-template-columns: 16px 23px 16px 22px 8px 16px 22px 8px 18px 25px 22px 14px; font: bold 13px/16px "Liberation Sans", sans-serif; color: #444; }
  .fcol { width: 16px; text-align: center; border-bottom: 3px solid #fff; }
  .u { text-decoration: underline; }
  .i { font-family: "Liberation Serif", serif; font-style: italic; }
  .clip { flex: 1; border: 0; }
  .only { width: 34px; padding: 32px 0 0 14px; }
  .tools { display: flex; flex-direction: column; justify-content: space-between; width: 26px; height: 60px; padding-top: 2px; }
  .clip .off { width: 30px; color: #aaa; }

  .notice { display: flex; align-items: center; height: 30px; padding: 0 10px 0 11px; background: #fcf5b4; border-bottom: 1px solid #a08c46; font-size: 11px; }
  .notice > .ic:first-child { margin-right: 385px; }
  .notice button { width: 105px; height: 21px; border: 1px solid #aaa; background: #fff; margin-right: 10px; }
  .notice > .fit + .fit { margin-left: 10px; }
  .notice > .fit + .ic { margin-left: 8px; }

  .formula { display: flex; height: 44px; padding: 10px 5px 8px; font-size: 13px; color: #444; }
  .formula > div { display: flex; align-items: center; height: 26px; border: 1px solid #c6c6c6; background: #fff; letter-spacing: -.3px; }
  .ref { width: 118px; justify-content: space-between; padding: 0 6px; }
  .dots { width: 30px; text-align: center; line-height: 26px; color: #888; }
  .fx { width: 110px; padding: 0 13px; justify-content: space-between; }
  .fx em { font: italic bold 15px "Liberation Serif", serif; color: #555; }
  .fx small { font-size: 11px; }
  .expr { width: 1095px; margin-left: 3px; justify-content: space-between; padding: 0 5px 0 11px; }

  .book { display: flex; height: 449px; border-bottom: 1px solid #8f8f8f; }
  .vscroll { width: 22px; display: flex; flex-direction: column; padding: 4px 4px 0 3px; }
  .arrow { display: flex; align-items: center; justify-content: center; height: 15px; border: 1px solid #777; background: #fff; }
  .thumb { height: 207px; border: 1px solid #777; background: #fff; }
  .track { flex: 1; background: #f0f0f0; }
  .grid {
    display: grid;
    width: 1344px;
    grid-template-columns: 9px 77px 66px 59px 60px 48px 55px 58px 54px 64px 61px 49px 64px 58px 61px 60px 57px 47px 68px 63px 65px 86px 30px 25px;
    grid-template-rows: 18px 28px 32px 42px repeat(8, 28px) 28px 24px 52px;
    background: #fff;
    color: #111;
  }
  .grid > div { position: relative; display: flex; align-items: center; justify-content: center; min-width: 0; min-height: 0; }
  .colh { grid-row: 1; background: #e6e6e6; border-right: 1px solid #b5b5b5; border-bottom: 1px solid #999; font: 13px/15px "Liberation Sans", sans-serif; padding-top: 2px; }
  .corner { grid-row: 1; background: #e6e6e6; border-bottom: 1px solid #999; }
  .corner svg { margin-right: 10px; }
  .grid > .rowh { grid-column: 24; background: #e6e6e6; border-bottom: 1px solid #aaa; border-left: 1px solid #8f8f8f; margin-left: -1px; align-items: flex-end; font: 14px/17px "Liberation Sans", sans-serif; z-index: 1; }
  .last { grid-row: 15; }
  .pad { grid-column: 1; grid-row: 2 / 16; border-left: 1px solid #8f8f8f; margin-left: -1px; background: linear-gradient(#999, #999) 0 101px / 10px 1px no-repeat; }
  .navy { grid-row: 2; background: #1f497d; color: #fff; font-weight: bold; font-size: 14px; }
  .long { grid-column: 2 / 15; border-right: 1px solid #fff; }
  .grid > .date { grid-column: 15 / 19; border-bottom: 1px solid #dbe5f1; }
  .filter { position: absolute; left: 0; bottom: 0; width: 17px; height: 17px; display: flex; align-items: center; justify-content: center; background: #f5f8fb; border: 1px solid #c4cbd4; }
  .black { grid-row: 2; grid-column: 19 / 24; background: #000; color: #fff; font-size: 14px; }
  .blank { grid-row: 3; grid-column: 19 / 24; background: #f2f2f2; border-bottom: 1px solid #95b3d7; border-top: 1px solid #c5d9f1; }
  .grid > .vhead, .grid > .uhead { grid-row: 3 / 5; flex-direction: column; gap: 3px; border-bottom: 1px solid #999; border-right: 1px solid #dbe5f1; padding-top: 2px; font-size: 13px; }
  .vhead { grid-column: 2; background: #002060; color: #fff; }
  .uhead { grid-column: 3; background: #948a54; }
  .ghead { grid-row: 3; background: #f2f2f2; border-right: 1px solid #95b3d7; border-bottom: 1px solid #95b3d7; font-size: 13px; }
  .dark { background: #a6a6a6; }
  .grid > .sub { grid-row: 4; flex-direction: column; gap: 3px; padding-top: 2px; background: #f2f2f2; border-right: 1px solid #a9c3e0; border-bottom: 1px solid #999; font-size: 12px; }
  .grid > .sub.dark { background: #d9d9d9; }
  .grid > .orange { background: #fabf8f; color: #111; }
  .cell { border-right: 1px solid #85abd0; border-bottom: 1px solid #c5d5e6; font-size: 11.5px; letter-spacing: -.5px; }
  .cell .fit { font-size: 14px; letter-spacing: 0; }
  .na { font-size: 13px; letter-spacing: -.3px; }
  .light { background: #f2f2f2; }
  .grey { background: #d9d9d9; }
  .diesel { border-color: #e3e3e3; }
  .plain { border-color: #dbe5ee; }
  .grid > .right { justify-content: flex-end; padding-right: 8px; }
  .num { font: 13px "Liberation Sans", sans-serif; }
  .err { position: absolute; right: 0; top: 0; border: 3px solid; border-color: #107c10 #107c10 transparent transparent; }
  .grid > .total { grid-row: 13; justify-content: flex-end; padding-right: 8px; background: #da9694; border-right: 1px solid #f3e4e4; font: bold 12px/15px "Liberation Serif", serif; }
  .grid > .mid { justify-content: center; padding: 0; }
  .grid > .dash { padding-right: 18px; }
  .under { text-decoration: underline; }
  .grid > .tgrey { background: #d9d9d9; }
  .grid > .torange { background: #fabf8f; padding-right: 3px; }
  .sum { grid-column: 20 / 24; }
  .grid > .freeze { border-right-color: #8f8f8f; }
  .below { grid-row: 14 / 16; grid-column: 2 / 19; border-right: 1px solid #8f8f8f; }
  .b2 { grid-column: 19 / 24; border: 0; }

  .tabs { display: flex; height: 28px; border-bottom: 1px solid #c6c6c6; font-size: 11px; color: #555; padding-left: 21px; }
  .tabs > .ic { margin: 5px 35px 0 850px; }
  .tabs .dots { width: 30px; }
  .st { display: flex; align-items: center; justify-content: center; height: 19px; margin-top: 4px; border-left: 1px solid #8a8a8a; }
  .w1 { width: 51px; }
  .w2 { width: 54px; }
  .active { width: 106px; height: 25px; margin-top: -1px; padding-top: 2px; background: #fff; color: #217346; border-right: 1px solid #999; border-bottom: 2px solid #217346; }
  .w3 { width: 52px; border: 0; }
  .w4 { width: 50px; border-right: 1px solid #8a8a8a; }
  .arrows { display: flex; align-items: center; gap: 25px; margin-left: 39px; }

  .status { display: flex; height: 21px; background: #f3f3f3; }
  .status span { width: 40px; display: flex; align-items: center; justify-content: center; }
  .status .sel { width: 40px; background: #c9c9c9; margin-left: 1px; }

  footer { display: flex; height: 40px; background: linear-gradient(90deg, #1c222b, #202124 20%, #2a2521 45%, #2c2723 65%, #232323); color: #fff; }
  .tray { display: grid; width: 396px; align-items: center; grid-template-columns: 17px 41px 76px 28px 28px 21px 26px 40px 30px 60px; font-size: 12px; }
  .peek { width: 1px; height: 40px; margin-left: 4px; background: #5a5f66; }
  .clock { width: 60px; display: flex; flex-direction: column; align-items: center; gap: 3px; letter-spacing: -.4px; margin-top: -3px; }
  .lang { padding-left: 4px; font: 13px "DejaVu Sans", sans-serif; }
  .apps { display: grid; width: 634px; }
  .app { display: flex; align-items: center; justify-content: center; height: 40px; }
  .running { border-bottom: 2px solid #76b9ed; }
  .hot { background: #51504e; }
  .search { display: flex; align-items: center; width: 288px; background: #f2f2f2; border: 1px solid #bbb; color: #444; padding-left: 8px; font-size: 14px; }
  .search .fit { margin: 0 12px 0 82px; }
  .start { flex: 1; display: flex; align-items: center; justify-content: center; }

  .mark { position: absolute; left: 601px; top: 672px; width: 164px; height: 80px; }
  .mark :global(.m1) { font-size: 52px; line-height: 54px; height: 53px; color: rgba(136, 136, 136, .28); }
  .mark :global(.m2) { font: bold 23px/26px "Liberation Sans", sans-serif; color: rgba(170, 170, 170, .45); }
</style>
